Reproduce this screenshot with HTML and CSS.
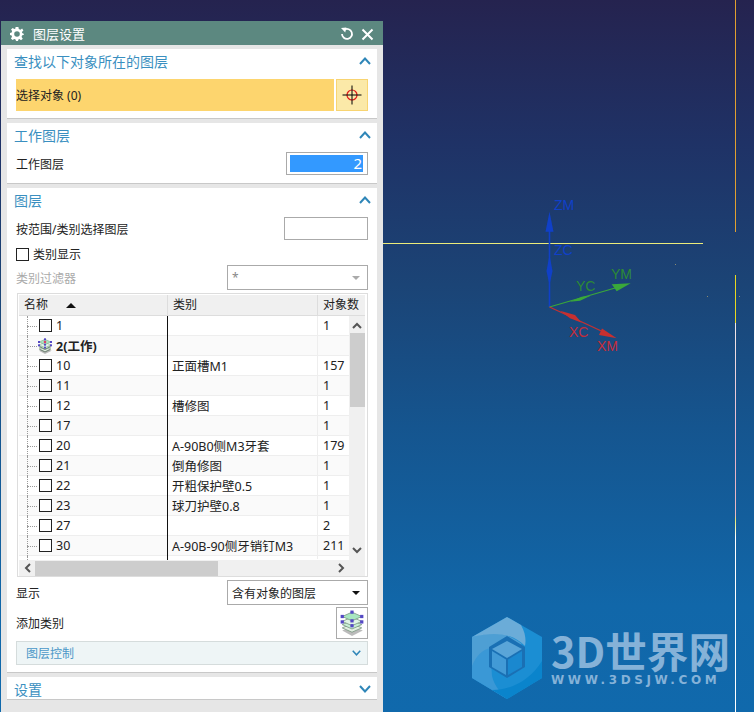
FILE: index.html
```html
<!DOCTYPE html>
<html lang="zh-CN">
<head>
    <meta charset="UTF-8">
    <title>图层设置</title>
    <link rel="stylesheet" href="styles.css">
</head>
<body>
    <svg class="defs" width="0" height="0">
        <symbol id="stack" viewBox="0 0 24 24">
            <path d="M3 19 L12 15 L22 19 L12 24 Z" fill="#8d8d8d" opacity="0.6"/>
            <path d="M3 16.5 L12 12.5 L21 16.5 L12 20.5 Z" fill="#e2eee2" stroke="#72907a" stroke-width="0.7"/>
            <path d="M3 13.5 L12 9.5 L21 13.5 L12 17.5 Z" fill="#c8efd6" stroke="#72907a" stroke-width="0.7"/>
            <path d="M3 10.5 L12 6.5 L21 10.5 L12 14.5 Z" fill="#dff5e6" stroke="#72907a" stroke-width="0.7"/>
            <path d="M3 6 L12 2 L21 6 L12 10 Z" fill="#a8e6c0" stroke="#72907a" stroke-width="0.7"/>
            <g fill="#5448c4">
                <rect x="10.5" y="0.5" width="3" height="3"/>
                <rect x="1.5" y="4.5" width="3" height="3"/>
                <rect x="19.5" y="4.5" width="3" height="3"/>
                <rect x="10.5" y="8.5" width="3" height="3"/>
                <rect x="1.5" y="9.5" width="3" height="3"/>
                <rect x="19.5" y="9.5" width="3" height="3"/>
                <rect x="10.5" y="13" width="3" height="3"/>
            </g>
        </symbol>
        <symbol id="chev-up" viewBox="0 0 12 10">
            <path d="M1 8 L6 2.5 L11 8" fill="none" stroke="#2f86b8" stroke-width="2"/>
        </symbol>
        <symbol id="chev-down" viewBox="0 0 12 10">
            <path d="M1 2 L6 7.5 L11 2" fill="none" stroke="#2f86b8" stroke-width="2"/>
        </symbol>
    </svg>

    <div class="panel">
        <div class="titlebar">
            <svg class="gear" width="16" height="16" viewBox="0 0 16 16">
                <path d="M6.6 1 H9.4 L9.8 3 L11.4 3.7 L13.1 2.6 L14.4 4.6 L12.9 5.9 L13.2 7 L15 8 L15 8.6 L13 9.6 L12.6 11 L13.8 12.7 L12 14.2 L10.4 13 L9.4 13.4 L9 15 H7 L6.6 13.4 L5.2 12.9 L3.6 14.1 L1.9 12.4 L3 10.8 L2.6 9.6 L1 9 V7 L2.7 6.4 L3.1 5.1 L2 3.5 L3.7 2 L5.3 3.1 L6.3 2.8 Z M8 5.2 A2.8 2.8 0 1 0 8 10.8 A2.8 2.8 0 1 0 8 5.2 Z" fill="#fff" fill-rule="evenodd"/>
            </svg>
            <span class="title-text">图层设置</span>
            <svg class="btn-refresh" width="14" height="14" viewBox="0 0 14 14">
                <path d="M4.5 2.6 A5 5 0 1 1 2 7" fill="none" stroke="#fff" stroke-width="1.8"/>
                <path d="M1 1 L6.4 0.6 L5.2 5.4 Z" fill="#fff"/>
            </svg>
            <svg class="btn-close" width="13" height="13" viewBox="0 0 13 13">
                <path d="M1.5 1.5 L11.5 11.5 M11.5 1.5 L1.5 11.5" stroke="#fff" stroke-width="2"/>
            </svg>
        </div>

        <div class="body">
            <section class="group group-find">
                <div class="group-head">
                    <span>查找以下对象所在的图层</span>
                    <svg class="chev" width="12" height="10"><use href="#chev-up"/></svg>
                </div>
                <div class="select-row">
                    <div class="select-bar">选择对象 (0)</div>
                    <div class="select-btn">
                        <svg width="20" height="20" viewBox="0 0 20 20">
                            <circle cx="10" cy="10" r="5" fill="none" stroke="#e01818" stroke-width="1.2"/>
                            <path d="M10 0.5 V19.5 M0.5 10 H19.5" stroke="#000" stroke-width="1"/>
                        </svg>
                    </div>
                </div>
            </section>

            <section class="group group-work">
                <div class="group-head">
                    <span>工作图层</span>
                    <svg class="chev" width="12" height="10"><use href="#chev-up"/></svg>
                </div>
                <div class="row row-work">
                    <span>工作图层</span>
                    <div class="work-input"><span class="work-value">2</span></div>
                </div>
            </section>

            <section class="group group-layers">
                <div class="group-head">
                    <span>图层</span>
                    <svg class="chev" width="12" height="10"><use href="#chev-up"/></svg>
                </div>
                <div class="row row-range">
                    <span>按范围/类别选择图层</span>
                    <div class="range-input"></div>
                </div>
                <label class="row-check">
                    <span class="check"></span>
                    <span>类别显示</span>
                </label>
                <div class="row row-filter">
                    <span class="muted">类别过滤器</span>
                    <div class="combo combo-off">
                        <span>*</span>
                        <span class="caret caret-off"></span>
                    </div>
                </div>

                <div class="table">
                    <div class="thead">
                        <div class="th th-name">名称<span class="sort"></span></div>
                        <div class="th">类别</div>
                        <div class="th th-count">对象数</div>
                    </div>
                    <div class="tbody-wrap">
                        <div class="tbody" id="rows">
                            <div class="tr"><div class="td td-name"><span class="check"></span>1</div><div class="td td-cat"></div><div class="td">1</div></div>
                            <div class="tr alt"><div class="td td-name bold"><svg class="row-icon" width="16" height="16" viewBox="0 0 24 24"><use href="#stack" width="24" height="24"/><path d="M4 17 L12 21 L20 17 M4 13 L12 17 L20 13" fill="none" stroke="#6e7f72" stroke-width="1.4"/><circle cx="12" cy="6" r="2" fill="#e0406a"/></svg>2(工作)</div><div class="td td-cat"></div><div class="td"></div></div>
                            <div class="tr"><div class="td td-name"><span class="check"></span>10</div><div class="td td-cat">正面槽M1</div><div class="td">157</div></div>
                            <div class="tr alt"><div class="td td-name"><span class="check"></span>11</div><div class="td td-cat"></div><div class="td">1</div></div>
                            <div class="tr"><div class="td td-name"><span class="check"></span>12</div><div class="td td-cat">槽修图</div><div class="td">1</div></div>
                            <div class="tr alt"><div class="td td-name"><span class="check"></span>17</div><div class="td td-cat"></div><div class="td">1</div></div>
                            <div class="tr"><div class="td td-name"><span class="check"></span>20</div><div class="td td-cat">A-90B0侧M3牙套</div><div class="td">179</div></div>
                            <div class="tr alt"><div class="td td-name"><span class="check"></span>21</div><div class="td td-cat">倒角修图</div><div class="td">1</div></div>
                            <div class="tr"><div class="td td-name"><span class="check"></span>22</div><div class="td td-cat">开粗保护壁0.5</div><div class="td">1</div></div>
                            <div class="tr alt"><div class="td td-name"><span class="check"></span>23</div><div class="td td-cat">球刀护壁0.8</div><div class="td">1</div></div>
                            <div class="tr"><div class="td td-name"><span class="check"></span>27</div><div class="td td-cat"></div><div class="td">2</div></div>
                            <div class="tr alt"><div class="td td-name"><span class="check"></span>30</div><div class="td td-cat">A-90B-90侧牙销钉M3</div><div class="td">211</div></div>
                            <div class="tr tr-cut"><div class="td td-name"></div><div class="td td-cat"></div><div class="td"></div></div>
                        </div>
                        <div class="vscroll">
                            <svg class="arrow" width="10" height="8" viewBox="0 0 10 8"><path d="M1 6 L5 2 L9 6" fill="none" stroke="#555" stroke-width="2"/></svg>
                            <div class="vthumb"></div>
                            <svg class="arrow arrow-bottom" width="10" height="8" viewBox="0 0 10 8"><path d="M1 2 L5 6 L9 2" fill="none" stroke="#555" stroke-width="2"/></svg>
                        </div>
                    </div>
                    <div class="hscroll">
                        <svg class="arrow-h" width="8" height="10" viewBox="0 0 8 10"><path d="M6 1 L2 5 L6 9" fill="none" stroke="#555" stroke-width="2"/></svg>
                        <div class="hthumb"></div>
                        <svg class="arrow-h arrow-right" width="8" height="10" viewBox="0 0 8 10"><path d="M2 1 L6 5 L2 9" fill="none" stroke="#555" stroke-width="2"/></svg>
                    </div>
                </div>

                <div class="row row-show">
                    <span>显示</span>
                    <div class="combo">
                        <span>含有对象的图层</span>
                        <span class="caret"></span>
                    </div>
                </div>
                <div class="row row-add">
                    <span>添加类别</span>
                    <div class="add-btn"><svg width="26" height="26"><use href="#stack"/></svg></div>
                </div>
                <div class="sub-head">
                    <span>图层控制</span>
                    <svg width="9" height="8"><use href="#chev-down"/></svg>
                </div>
            </section>

            <section class="group group-set">
                <div class="group-head">
                    <span>设置</span>
                    <svg class="chev" width="12" height="10"><use href="#chev-down"/></svg>
                </div>
            </section>
        </div>
    </div>

    <div class="viewport">
        <div class="line line-h"></div>
        <div class="line line-v1"></div>
        <div class="line line-v2"></div>
        <div class="speck s1"></div>
        <div class="speck s2"></div>
        <div class="speck s3"></div>

        <svg class="axes" width="110" height="170" viewBox="0 0 110 170">
            <g font-family="'Liberation Sans', sans-serif" font-size="14">
                <text x="12" y="17" fill="#1040c8">ZM</text>
                <text x="12" y="62" fill="#1040c8">ZC</text>
                <text x="69" y="86" fill="#2c8a34">YM</text>
                <text x="34" y="98" fill="#2c8a34">YC</text>
                <text x="27" y="144" fill="#c42d3a">XC</text>
                <text x="55" y="158" fill="#c42d3a">XM</text>
            </g>
            <path d="M7.5 114 V30" stroke="#1040c8" stroke-width="1.6"/>
            <path d="M7.5 18.7 L11.5 38.7 H3.5 Z" fill="#1040c8"/>
            <path d="M7.5 62 L10.5 78 L7.5 92 L4.5 78 Z" fill="#1040c8"/>
            <path d="M7.5 114 L80 93" stroke="#3aa83a" stroke-width="1.2"/>
            <path d="M88.7 90.3 L69.7 91.3 L74.7 98.3 Z" fill="#3aa83a"/>
            <path d="M28 108.7 L39.7 103.7 L48.7 102.7 L38 107.7 Z" fill="#3aa83a"/>
            <path d="M7.5 114 L68 142" stroke="#c83030" stroke-width="1.2"/>
            <path d="M74.7 145.3 L60 135.5 L57 142 Z" fill="#c83030"/>
            <path d="M18 117.7 L33 122 L39.7 129.7 L28 125.3 Z" fill="#c83030"/>
        </svg>

        <div class="logo">
            <svg class="logo-mark" width="74" height="84" viewBox="0 0 74 84">
                <path d="M37 1 L72 21 V62 L37 83 L2 62 V21 Z" fill="#1b8ed3"/>
                <path d="M2 21 C 25 14 40 18 52 28 L20 40 C 12 44 6 50 2 60 Z" fill="#4e9fd4"/>
                <path d="M37 1 L51 9 C 56 18 56 25 55 30 C 45 20 30 14 2 21 Z" fill="#6bacd8"/>
                <path d="M2 50 C 6 40 12 34 20 32 L22 60 C 24 68 28 74 37 83 L2 62 Z" fill="#3a98d6"/>
                <path d="M72 45 V62 L37 83 L22 74 C 42 74 60 64 72 45 Z" fill="#0a84cc"/>
                <path d="M37 20 L55 31 V51 L37 62 L19 51 V31 Z" fill="#1a70b4"/>
                <path d="M37 25 L52 33 L37 42 L22 33 Z" fill="#5aa5d8"/>
                <path d="M22 35 L36 43.5 V59 L22 51 Z" fill="#429ad6"/>
                <path d="M38 43.5 L52 35 V51 L38 59 Z" fill="#1a88cf"/>
            </svg>
            <div class="logo-text">
                <div class="logo-name">3D世界网</div>
                <div class="logo-url">WWW.3DSJW.COM</div>
            </div>
        </div>
    </div>
</body>
</html>
```

FILE: styles.css
```css
* {
    box-sizing: border-box;
}

html, body {
    height: 100%;
}

body {
    margin: 0;
    width: 754px;
    height: 712px;
    overflow: hidden;
    display: flex;
    align-items: flex-start;
    padding-top: 21px;
    padding-left: 1px;
    font-family: "Noto Sans", "Noto Sans CJK SC", sans-serif;
    font-size: 12px;
    color: #222;
    background: linear-gradient(to bottom, #25234f 0%, #1f3266 20%, #1b4476 40%, #15558f 60%, #1167a9 85%, #1069ac 100%);
}

.defs {
    position: absolute;
}

/* dialog */
.panel {
    width: 382px;
    height: 691px;
    flex: none;
    background: #e6e6e6;
    display: flex;
    flex-direction: column;
}

.titlebar {
    height: 24px;
    flex: none;
    background: #5c8880;
    display: flex;
    align-items: center;
    padding: 0 9px 0 8px;
    color: #fff;
}

.gear {
    margin-top: 2px;
}

.title-text {
    font-size: 13px;
    margin-left: 8px;
    flex: 1;
}

.btn-refresh {
    margin-right: 7px;
    margin-top: 2px;
}

.btn-close {
    margin-top: 2px;
}

.body {
    padding: 4px 6px 0;
    display: flex;
    flex-direction: column;
    gap: 4px;
}

.group {
    background: #fff;
    border-bottom: 1px solid #c8c8c8;
    padding: 0 6px 0 7px;
}

.group-find {
    height: 70px;
}

.group-work {
    height: 61px;
}

.group-layers {
    height: 485px;
}

.group-set {
    height: 23px;
}

.group-head {
    height: 26px;
    padding-bottom: 2px;
    display: flex;
    align-items: center;
    justify-content: space-between;
    font-size: 14px;
    color: #3a8fc0;
}

.select-row {
    display: flex;
    gap: 2px;
    margin: 4px 3px 0 2px;
}

.select-bar {
    flex: 1;
    height: 32px;
    background: #fdd56e;
    display: flex;
    align-items: center;
}

.select-btn {
    width: 32px;
    height: 32px;
    background: #fbe9a8;
    border: 1px solid #f8d471;
    display: flex;
    align-items: center;
    justify-content: center;
}

.row {
    display: flex;
    align-items: center;
    justify-content: space-between;
    margin: 0 3px 0 2px;
}

.row-work {
    margin-top: 3px;
    height: 23px;
}

.work-input {
    width: 82px;
    height: 23px;
    border: 1px solid #aaa;
    padding: 2px 4px 2px 3px;
}

.work-value {
    display: block;
    height: 17px;
    background: #3399ff;
    color: #fff;
    text-align: right;
    font-size: 15px;
    line-height: 17px;
    padding-right: 1px;
}

.row-range {
    height: 23px;
    margin-top: 3px;
}

.range-input {
    width: 84px;
    height: 23px;
    border: 1px solid #aaa;
}

.row-check {
    display: flex;
    align-items: center;
    gap: 4px;
    margin: 4px 0 0 2px;
    height: 20px;
}

.check {
    display: block;
    width: 13px;
    height: 13px;
    border: 1px solid #222;
    background: #fff;
    flex: none;
}

.row-filter {
    margin-top: 1px;
    height: 25px;
}

.muted {
    color: #aaa;
}

.combo {
    width: 141px;
    height: 25px;
    border: 1px solid #aaa;
    display: flex;
    align-items: center;
    justify-content: space-between;
    padding: 0 7px 0 4px;
    font-size: 12px;
}

.combo-off {
    color: #888;
}

.caret {
    width: 0;
    height: 0;
    border-left: 4px solid transparent;
    border-right: 4px solid transparent;
    border-top: 4px solid #111;
}

.caret-off {
    border-top-color: #aaa;
}

/* layer list */
.table {
    margin: 3px 3px 0 3px;
    height: 284px;
    border: 1px solid #ddd;
    padding: 1px 2px 1px 1px;
    display: flex;
    flex-direction: column;
}

.thead {
    display: grid;
    grid-template-columns: 149px 150px 1fr;
    height: 21px;
    background: #f0f0f0;
    border-bottom: 1px solid #ddd;
    flex: none;
}

.th {
    padding-left: 5px;
    border-right: 1px solid #ddd;
    line-height: 20px;
    white-space: nowrap;
    overflow: hidden;
}

.th-count {
    border-right: none;
}

.th-name {
    display: flex;
    align-items: center;
}

.sort {
    margin-left: 18px;
    width: 0;
    height: 0;
    border-left: 5px solid transparent;
    border-right: 5px solid transparent;
    border-bottom: 5px solid #111;
}

.tbody-wrap {
    display: flex;
    height: 244px;
    flex: none;
}

.tbody {
    flex: 1;
    overflow: hidden;
    position: relative;
}

/* black column rule lying over the rows */
.tbody::after {
    content: "";
    position: absolute;
    left: 148px;
    top: 0;
    bottom: 0;
    width: 1px;
    background: #111;
}

.tr {
    display: grid;
    grid-template-columns: 149px 150px 1fr;
    height: 20px;
    border-bottom: 1px solid #eee;
    background: #fff;
}

.tr.alt {
    background: #fafafa;
}

.tr-cut {
    height: 3px;
    border-bottom: none;
}

.td {
    display: flex;
    align-items: center;
    padding-left: 5px;
    white-space: nowrap;
    font-size: 12.5px;
    border-right: 1px solid #eee;
}

.td:last-child {
    border-right: none;
}

.td-cat {
    padding-left: 4px;
}

.td-name {
    position: relative;
    padding-left: 20px;
    gap: 4px;
}

.td-name::before {
    content: "";
    position: absolute;
    left: 8px;
    top: 0;
    bottom: -1px;
    border-left: 1px dotted #999;
}

.td-name::after {
    content: "";
    position: absolute;
    left: 8px;
    top: 10px;
    width: 10px;
    border-top: 1px dotted #999;
}

.td-name.bold {
    font-weight: 700;
    gap: 3px;
    padding-left: 18px;
}

.row-icon {
    flex: none;
    position: relative;
    z-index: 1;
}

.vscroll {
    width: 16px;
    background: #f0f0f0;
    display: flex;
    flex-direction: column;
    align-items: center;
    flex: none;
}

.arrow {
    margin-top: 6px;
    flex: none;
}

.vthumb {
    width: 15px;
    height: 74px;
    margin-top: 3px;
    background: #cdcdcd;
}

.arrow-bottom {
    margin-top: auto;
    margin-bottom: 6px;
}

.hscroll {
    height: 16px;
    background: #f0f0f0;
    display: flex;
    align-items: center;
    padding: 0 4px 0 5px;
    flex: none;
}

.hthumb {
    width: 183px;
    height: 15px;
    margin-left: 3px;
    background: #cdcdcd;
}

.arrow-right {
    margin-left: auto;
    margin-right: 16px;
}

.row-show {
    margin-top: 3px;
    height: 25px;
}

.row-add {
    margin-top: 2px;
    height: 32px;
}

.add-btn {
    width: 32px;
    height: 32px;
    border: 1px solid #aaa;
    display: flex;
    align-items: center;
    justify-content: center;
}

.sub-head {
    margin: 2px 3px 0 2px;
    height: 24px;
    background: #eef5f6;
    border: 1px solid #d5dcdc;
    display: flex;
    align-items: center;
    justify-content: space-between;
    padding: 0 6px 0 9px;
    color: #4a98c8;
}

/* graphics window */
.viewport {
    flex: 1;
    position: relative;
    align-self: stretch;
}

.line {
    position: absolute;
}

.line-h {
    left: 0;
    top: 222px;
    width: 320px;
    height: 1px;
    background: #ecec7a;
}

.line-v1 {
    left: 352px;
    top: -21px;
    width: 1px;
    height: 232px;
    background: #e0a030;
}

.line-v2 {
    left: 352px;
    top: 254px;
    width: 1px;
    height: 437px;
    background: linear-gradient(to bottom, #e8d820 0, #e8d820 11%, #f0e8e8 11%, #e8b0c8 40%, #e8b8c0 55%, #e8e870 56%, #fff 60%, #fff 100%);
}

.speck {
    position: absolute;
    width: 1px;
    height: 1px;
    background: #8a8a70;
}

.s1 {
    left: 292px;
    top: 243px;
}

.s2 {
    left: 324px;
    top: 275px;
}

.s3 {
    left: 356px;
    top: 275px;
}

.axes {
    position: absolute;
    left: 159px;
    top: 172px;
}

.logo {
    position: absolute;
    left: 87px;
    top: 595px;
    display: flex;
    gap: 7px;
    color: #85b2d8;
}

.logo-name {
    font-family: "Noto Sans CJK SC", sans-serif;
    font-size: 41.6px;
    font-weight: 700;
    line-height: 42px;
    margin-top: 13px;
    white-space: nowrap;
}

.logo-url {
    font-family: "DejaVu Sans", sans-serif;
    font-size: 12px;
    font-weight: 700;
    letter-spacing: 3.6px;
    line-height: 14px;
    margin-top: 2px;
    white-space: nowrap;
}
```
